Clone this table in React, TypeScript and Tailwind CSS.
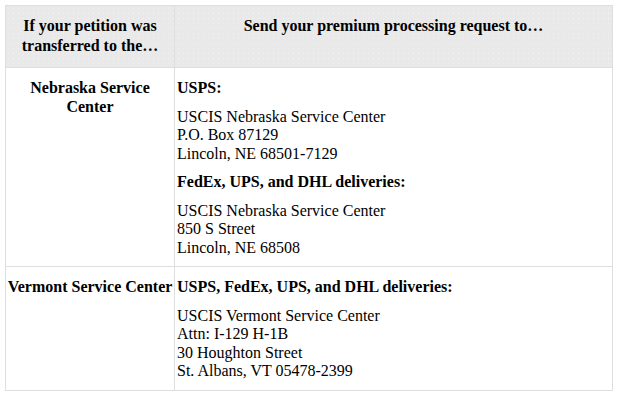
const rows = [
  {
    center: "Nebraska Service Center",
    blocks: [
      {
        title: "USPS:",
        lines: ["USCIS Nebraska Service Center", "P.O. Box 87129", "Lincoln, NE 68501-7129"],
      },
      {
        title: "FedEx, UPS, and DHL deliveries:",
        lines: ["USCIS Nebraska Service Center", "850 S Street", "Lincoln, NE 68508"],
      },
    ],
  },
  {
    center: "Vermont Service Center",
    blocks: [
      {
        title: "USPS, FedEx, UPS, and DHL deliveries:",
        lines: [
          "USCIS Vermont Service Center",
          "Attn: I-129 H-1B",
          "30 Houghton Street",
          "St. Albans, VT 05478-2399",
        ],
      },
    ],
  },
];

export default function App() {
  return (
    <div className="min-h-screen bg-white pl-[5px] pt-[5px] font-['Liberation_Serif',serif] text-[16px] leading-[18.5px] text-black">
      <table className="w-[608px] border-collapse border border-[#dedede]">
        <thead>
          <tr className="bg-[#e9e9e9] bg-[radial-gradient(#f2f2f2_0.6px,transparent_0.8px)] bg-[length:5px_5px]">
            <th className="w-[169px] border border-[#dedede] px-[2px] pb-[11px] pt-[10px] align-top font-bold leading-[20px]">
              If your petition was transferred to the…
            </th>
            <th className="border border-[#dedede] px-[2px] pb-[11px] pt-[10px] align-top font-bold leading-[20px]">
              Send your premium processing request to…
            </th>
          </tr>
        </thead>
        <tbody>
          {rows.map((row) => (
            <tr key={row.center}>
              <td className="whitespace-nowrap border border-[#dedede] px-[1px] pb-[9px] pt-[11px] text-center align-top font-bold">
                {row.center === "Nebraska Service Center" ? (
                  <>
                    Nebraska Service
                    <br />
                    Center
                  </>
                ) : (
                  row.center
                )}
              </td>
              <td className="border border-[#dedede] px-[2px] pb-[9px] pt-[11px] align-top">
                {row.blocks.map((b, i) => (
                  <div key={b.title} className={i > 0 ? "mt-[10px]" : ""}>
                    <p className="font-bold">{b.title}</p>
                    <p className="mt-[10px]">
                      {b.lines.map((l) => (
                        <span key={l} className="block">
                          {l}
                        </span>
                      ))}
                    </p>
                  </div>
                ))}
              </td>
            </tr>
          ))}
        </tbody>
      </table>
    </div>
  );
}
